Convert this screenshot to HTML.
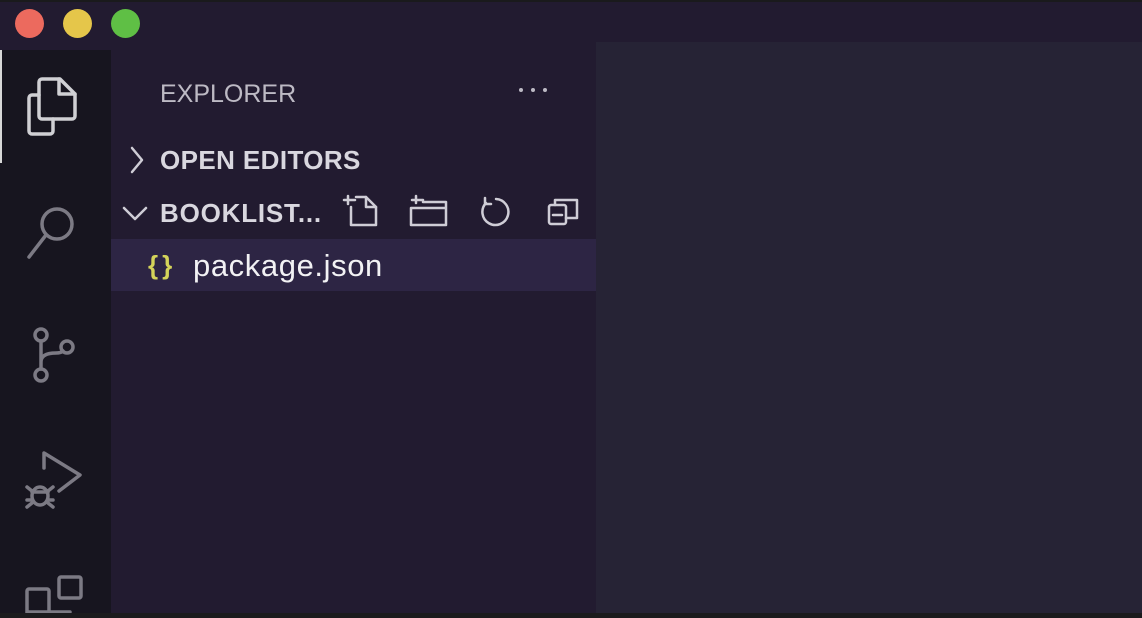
<!DOCTYPE html>
<html><head><style>
*{margin:0;padding:0;box-sizing:border-box}
body{width:1142px;height:618px;background:#221b30;position:relative;overflow:hidden;font-family:"Liberation Sans",sans-serif}
.abs{position:absolute}
.dot{position:absolute;top:9px;width:29px;height:29px;border-radius:50%}
</style></head><body>
<div class="abs" style="left:0;top:0;width:1142px;height:2px;background:#1a1a1c"></div>
<div class="dot" style="left:15px;background:#ec6a5e"></div>
<div class="dot" style="left:63px;background:#e5c64a"></div>
<div class="dot" style="left:111px;background:#5fbf45"></div>
<div class="abs" style="left:0;top:50px;width:111px;height:563px;background:#17151f"></div>
<div class="abs" style="left:0;top:50px;width:2px;height:113px;background:#d8d8d8"></div>
<div class="abs" style="left:111px;top:50px;width:485px;height:563px;background:#221b30"></div>
<div class="abs" style="left:596px;top:42px;width:546px;height:571px;background:#262335"></div>
<div class="abs" style="left:0;top:613px;width:1142px;height:5px;background:#1b1b1d"></div>
<div class="abs" style="left:111px;top:239px;width:485px;height:52px;background:#2d2544"></div>
<svg class="abs" style="left:0;top:50px" width="111" height="563" fill="none" stroke="#7c7a84" stroke-width="3.5" stroke-linecap="round" stroke-linejoin="round">
<g stroke="#d0d0d4">
<path d="M39 48 V32 a3 3 0 0 1 3-3 H60 L75 44 V66 a3 3 0 0 1 -3 3 H42 a3 3 0 0 1 -3-3Z"/>
<path d="M59 29 V44 H75"/>
<path d="M39 45 H32 a3 3 0 0 0 -3 3 V81 a3 3 0 0 0 3 3 H50 a3 3 0 0 0 3-3 V69"/>
</g>
<circle cx="57" cy="174" r="15"/><path d="M46 185 L29 207"/>
<circle cx="41" cy="285" r="6"/><circle cx="67" cy="297" r="6"/><circle cx="41" cy="325" r="6"/>
<path d="M41 291 V319 M41 312 Q41 303 56 303 Q61 303 63 301"/>
<path d="M44 418 V403 L80 425 L59 441"/>
<ellipse cx="40" cy="446" rx="8" ry="9"/><path d="M32 442 H48 M27 437 L32 441 M27 450 H32 M27 457 L32 453 M53 437 L48 441 M53 450 H48 M53 457 L48 453"/>
<rect x="59" y="527" width="22" height="21" rx="2"/>
<path d="M27 563 V541 a2 2 0 0 1 2-2 H47 a2 2 0 0 1 2 2 V563 M27 562 H70"/>
</svg>
<div class="abs" style="left:160px;top:80px;font-size:25px;color:#bdbac4">EXPLORER</div>
<svg class="abs" style="left:515px;top:85px" width="40" height="10"><g fill="#bdbac4"><circle cx="6" cy="5" r="2"/><circle cx="18" cy="5" r="2"/><circle cx="30" cy="5" r="2"/></g></svg>
<svg class="abs" style="left:120px;top:140px" width="480" height="100" fill="none" stroke="#cfcdd6" stroke-width="2.5" stroke-linecap="round" stroke-linejoin="round">
<path d="M12 8 L22 20 L12 32"/>
<path d="M4 68 L15 79 L26 68"/>
<path d="M228 64 V56 M224 60 H235 M236 57 H246 L256 67 V85 H231 V67"/><path d="M246 57 V67 H256"/>
<path d="M296 63 V56 M292 60 H303 M303 62 H326 V85 H291 V68 H326"/>
<path d="M366 63 A13 13 0 1 0 376 59 M365 58 V64 H371"/>
<rect x="429" y="65" width="17" height="19" rx="2"/><path d="M435 65 V60 H457 V78 H446 M433 75 H442"/>
</svg>
<div class="abs" style="left:160px;top:145px;font-size:26px;font-weight:bold;color:#d9d7df;letter-spacing:0.4px">OPEN EDITORS</div>
<div class="abs" style="left:160px;top:198px;font-size:26px;font-weight:bold;color:#d9d7df;letter-spacing:0.8px">BOOKLIST...</div>
<div class="abs" style="left:148px;top:250px;font-size:26px;font-weight:bold;color:#d4d35a;letter-spacing:4px">{}</div>
<div class="abs" style="left:193px;top:248px;font-size:31px;color:#f2f2f4;letter-spacing:0.6px">package.json</div>
</body></html>
